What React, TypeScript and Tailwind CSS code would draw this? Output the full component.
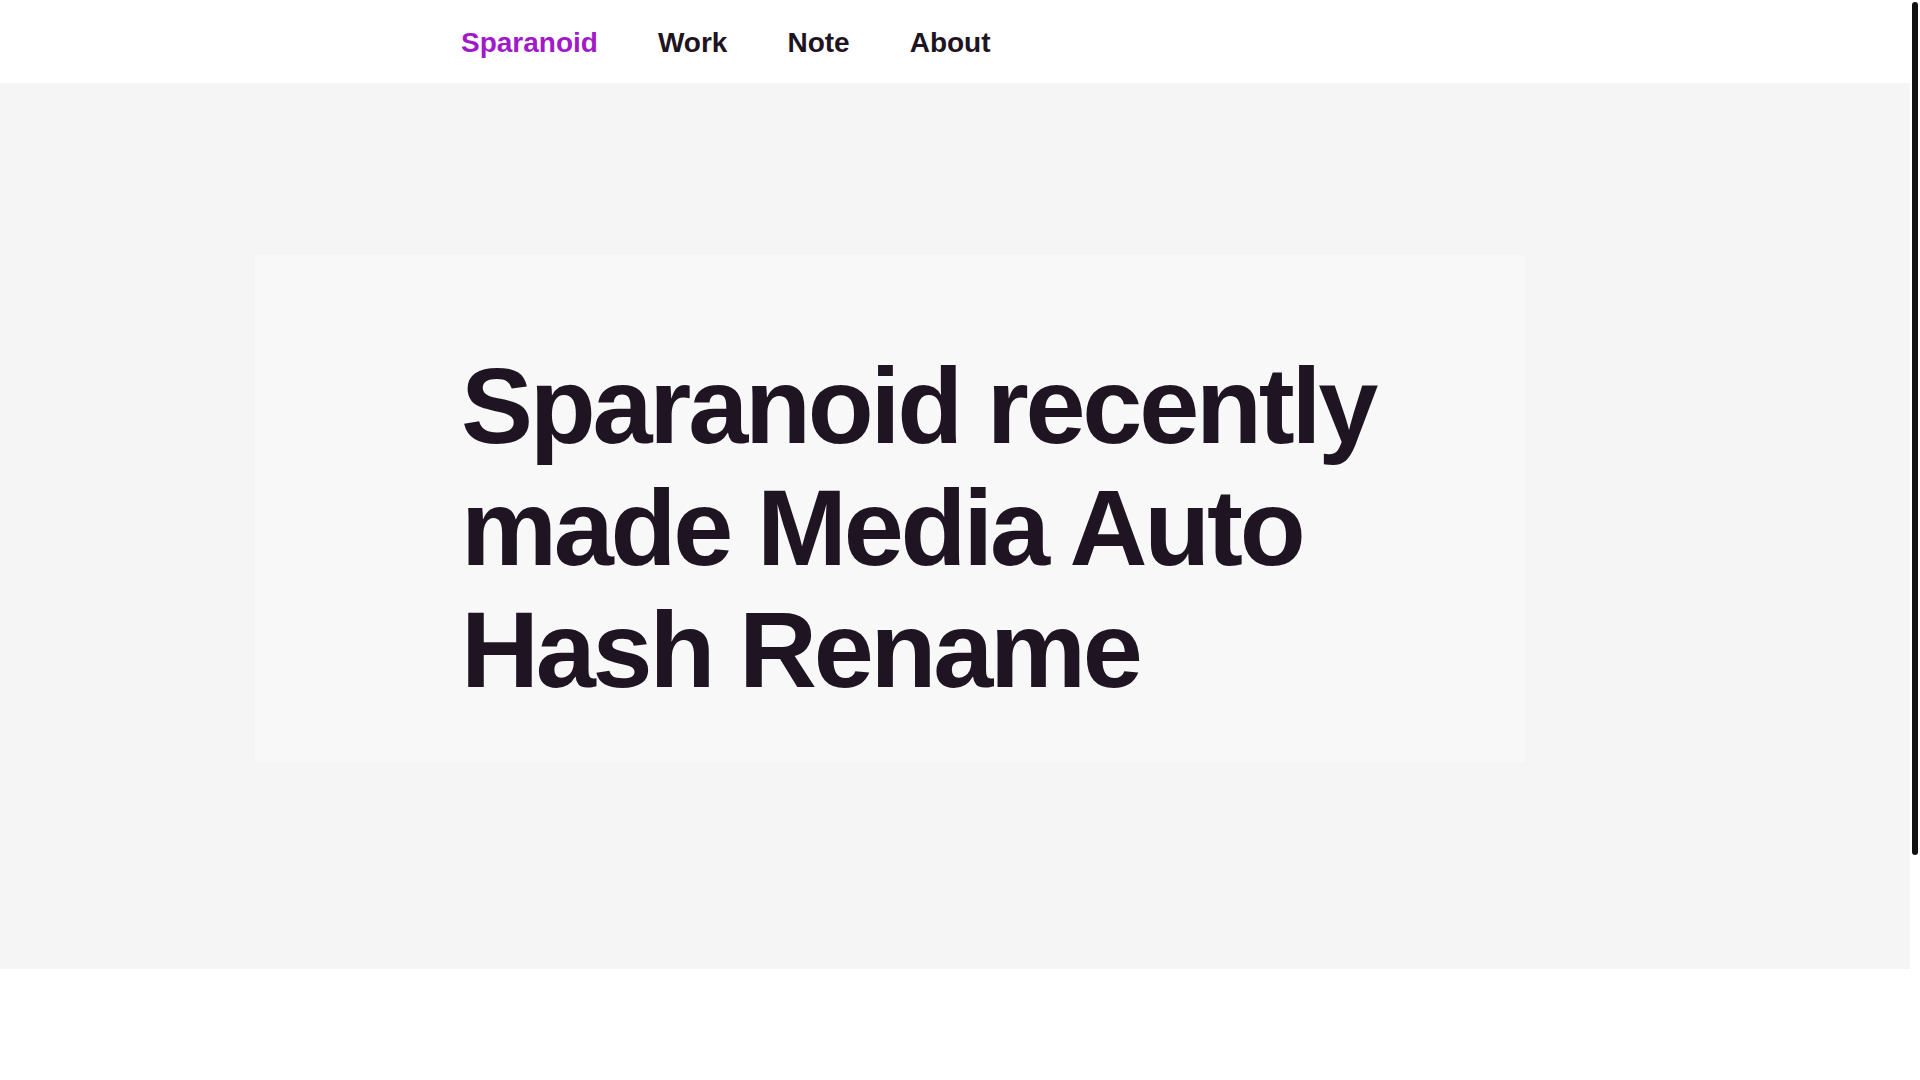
const links = [
  { label: "Sparanoid", active: true },
  { label: "Work", active: false },
  { label: "Note", active: false },
  { label: "About", active: false },
]

export default function App() {
  return (
    <div className="h-screen overflow-hidden flex bg-white text-[#1e1422] [font-family:'Liberation_Sans',Arial,sans-serif]">
      <div className="flex-1">
        {/* Header */}
        <nav className="h-[83px] bg-white flex items-center pl-[461px] gap-[60px] pt-[2px]">
          {links.map(l => (
            <a
              key={l.label}
              href="#"
              className={
                l.active
                  ? "text-[28px] font-bold text-[#a11ac9]"
                  : "text-[28px] font-bold text-[#1e1422]"
              }
            >
              {l.label}
            </a>
          ))}
        </nav>

        {/* Hero */}
        <section className="h-[886px] bg-[#f5f5f5] pt-[172px] pl-[255px]">
          <div className="w-[1270px] h-[507px] bg-[#f8f8f8] pt-[90px] pl-[206px]">
            <h1 className="max-w-[990px] text-[108px] leading-[122px] font-bold tracking-[-0.03em]">
              Sparanoid recently made Media Auto Hash Rename
            </h1>
          </div>
        </section>
      </div>

      {/* Scrollbar */}
      <div className="w-[10px] bg-white p-[2px]">
        <div className="h-[853px] rounded-full bg-[#111]" />
      </div>
    </div>
  )
}
